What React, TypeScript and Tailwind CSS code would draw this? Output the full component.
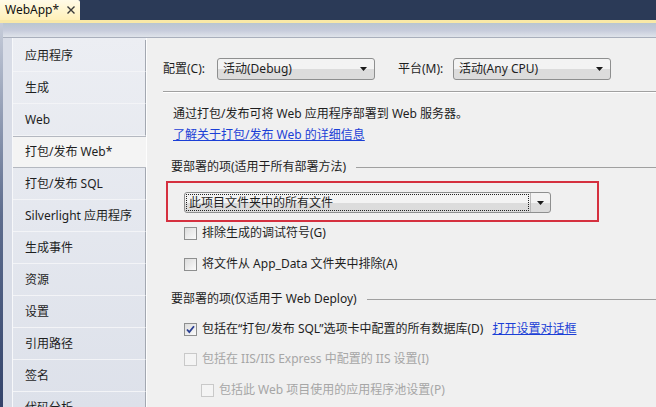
const NAV = ['应用程序', '生成', 'Web', '打包/发布 Web*', '打包/发布 SQL', 'Silverlight 应用程序', '生成事件', '资源', '设置', '引用路径', '签名', '代码分析']
const ACTIVE = 3

function Arrow() {
  return (
    <svg width="7" height="4" viewBox="0 0 7 4" className="flex-none">
      <path d="M0 0h7L3.5 4z" fill="#1a1a1a" />
    </svg>
  )
}

function Combo({ value, w }: { value: string; w: string }) {
  return (
    <div className={`${w} h-[22px] flex items-center justify-between pl-[5px] pr-[7px] rounded-[3px] border border-[#8e8f8f] bg-linear-to-b from-[#f3f3f3] from-50% to-[#dcdcdc] to-50%`}>
      <span>{value}</span>
      <Arrow />
    </div>
  )
}

function Check({ checked, disabled }: { checked?: boolean; disabled?: boolean }) {
  return (
    <span
      className={[
        'flex-none w-[13px] h-[13px] border flex items-center justify-center',
        disabled ? 'border-[#c9c9c9] bg-[#f4f4f4]' : 'border-[#8e8f8f] bg-linear-to-br from-[#dcdcdc] to-[#fbfbfb]',
      ].join(' ')}
    >
      {checked && (
        <svg width="9" height="9" viewBox="0 0 9 9">
          <path d="M1 4.5l2.3 2.6L8 1.2" fill="none" stroke="#2a3f91" strokeWidth="1.8" />
        </svg>
      )}
    </span>
  )
}

function CheckRow({ label, checked, disabled, indent, mt, children }: {
  label: string; checked?: boolean; disabled?: boolean; indent: string; mt: string; children?: React.ReactNode
}) {
  return (
    <div className={`flex items-center h-[16px] ${indent} ${mt}`}>
      <Check checked={checked} disabled={disabled} />
      <span className={['ml-[5px]', disabled ? 'text-[#a6a6a6]' : ''].join(' ')}>{label}</span>
      {children}
    </div>
  )
}

function Heading({ text, mt }: { text: string; mt: string }) {
  return (
    <div className={`flex items-center h-[16px] ml-[8px] ${mt}`}>
      <span>{text}</span>
      <div className="flex-1 ml-[10px] h-px bg-[#a0a0a0]" />
    </div>
  )
}

export default function App() {
  return (
    <div className="w-[656px] h-[407px] overflow-hidden flex flex-col bg-[#2b3a57] text-[12px] leading-[16px] text-[#1e1e1e] font-['Noto_Sans','Noto_Sans_CJK_SC',sans-serif]">
      <div className="h-[20px] flex-none flex items-end">
        <div className="w-[80px] h-[20px] flex items-center justify-between pl-[5px] pr-[5px] rounded-tr-[2px] bg-linear-to-b from-[#fffbe8] to-[#fff0b8]">
          <span className="text-[#111]">WebApp*</span>
          <svg width="8" height="8" viewBox="0 0 8 8">
            <path d="M0.5 0.5l7 7M7.5 0.5l-7 7" stroke="#3a3a3a" strokeWidth="1.4" />
          </svg>
        </div>
      </div>
      <div className="h-[3px] flex-none bg-[#f9e9a7]" />
      <div className="flex flex-1 min-h-0 bg-[#d9dde7]">
        <div className="w-[3px] flex-none bg-linear-to-b from-[#c6ccd9] via-[#5d6c8d] to-[#33436a]" />
        <div className="flex flex-1 flex-col min-w-0">
          <div className="h-[15px] flex-none bg-linear-to-b from-[#b9c6d0] via-[#c6cbdb] to-[#dfe3ea] border-b border-[#a9afbc]" />
          <div className="flex flex-1 min-h-0 pl-[9px]">
            <nav className="w-[134px] flex-none flex flex-col pt-[2px] border-l border-[#f7f8fa] bg-linear-to-b from-[#eceef3] to-[#dde1ea]">
              {NAV.map((item, i) => {
                const active = i === ACTIVE
                return (
                  <div
                    key={item}
                    className={[
                      'h-[32px] flex-none flex items-center pl-[12px] whitespace-nowrap',
                      active
                        ? 'bg-[#f4f4f4] border-y border-[#b4b8c0]'
                        : 'border-r border-[#a3a8b1] border-b border-b-[#f3f4f7]',
                    ].join(' ')}
                  >
                    {item}
                  </div>
                )
              })}
            </nav>
            <div className="flex-1 min-w-0 flex flex-col bg-[#f0f0f0] border-l border-[#fdfdfd] pt-[20px] pl-[16px]">
              <div className="flex items-center h-[22px]">
                <span className="w-[54px]">配置(C):</span>
                <Combo value="活动(Debug)" w="w-[158px]" />
                <span className="w-[55px] ml-[23px]">平台(M):</span>
                <Combo value="活动(Any CPU)" w="w-[158px]" />
              </div>
              <div className="mt-[11px] h-px bg-[#a0a0a0]" />
              <div className="h-px bg-white" />
              <div className="mt-[13px] ml-[10px] h-[16px]">通过打包/发布可将 Web 应用程序部署到 Web 服务器。</div>
              <div className="mt-[5px] ml-[10px] h-[16px]">
                <a className="text-[#1b3fd6] underline">了解关于打包/发布 Web 的详细信息</a>
              </div>
              <Heading text="要部署的项(适用于所有部署方法)" mt="mt-[16px]" />
              <div className="mt-[6px] ml-[3px] w-[433px] h-[41px] border-2 border-[#d5303f] pt-[9px] pl-[16px]">
                <div className="w-[367px] h-[21px] flex rounded-[3px] border border-[#8e8f8f] bg-linear-to-b from-[#f3f3f3] from-50% to-[#dcdcdc] to-50%">
                  <div className="flex-1 m-[1px] border border-dotted border-[#222] flex items-center pl-[2px]">此项目文件夹中的所有文件</div>
                  <div className="w-[20px] flex items-center justify-center border-l border-[#b8b8b8]">
                    <Arrow />
                  </div>
                </div>
              </div>
              <CheckRow label="排除生成的调试符号(G)" indent="ml-[21px]" mt="mt-[3px]" />
              <CheckRow label="将文件从 App_Data 文件夹中排除(A)" indent="ml-[21px]" mt="mt-[15px]" />
              <Heading text="要部署的项(仅适用于 Web Deploy)" mt="mt-[19px]" />
              <CheckRow label="包括在“打包/发布 SQL”选项卡中配置的所有数据库(D)" checked indent="ml-[21px]" mt="mt-[14px]">
                <a className="ml-[9px] text-[#1b3fd6] underline">打开设置对话框</a>
              </CheckRow>
              <CheckRow label="包括在 IIS/IIS Express 中配置的 IIS 设置(I)" disabled indent="ml-[21px]" mt="mt-[14px]" />
              <CheckRow label="包括此 Web 项目使用的应用程序池设置(P)" disabled indent="ml-[38px]" mt="mt-[15px]" />
            </div>
          </div>
        </div>
      </div>
    </div>
  )
}
